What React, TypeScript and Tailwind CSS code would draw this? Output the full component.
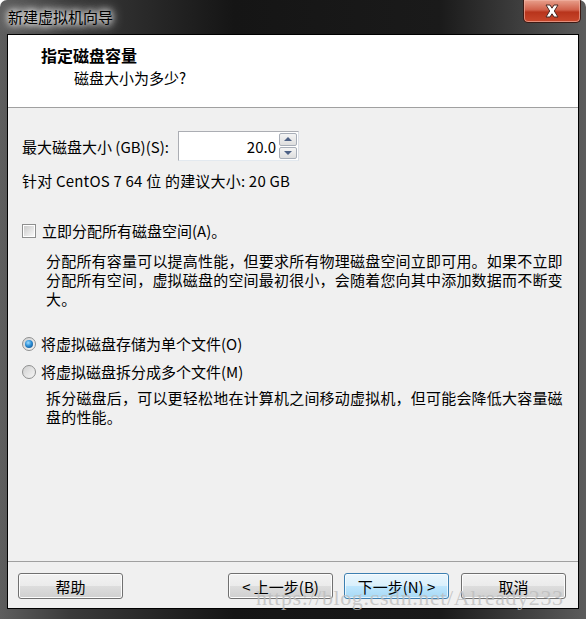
import React, { useState } from 'react';

const FONT = '"Noto Sans CJK SC", "Noto Sans", sans-serif';

const WinButton: React.FC<{ label: string; primary?: boolean; className?: string }> = ({ label, primary, className }) => (
  <button
    className={`h-[26px] w-[105px] rounded-[3px] border text-[15px] leading-none text-black ${
      primary
        ? 'border-[#3c7fb1] bg-[linear-gradient(180deg,#eaf6fd_0%,#d9f0fc_50%,#bee6fd_51%,#a7d9f5_100%)] shadow-[inset_0_0_0_1px_#ffffffaa]'
        : 'border-[#707070] bg-[linear-gradient(180deg,#f2f2f2_0%,#ebebeb_50%,#dddddd_51%,#cfcfcf_100%)] shadow-[inset_0_0_0_1px_#fcfcfc]'
    } ${className ?? ''}`}
  >
    {label}
  </button>
);

const App: React.FC = () => {
  const [allocate, setAllocate] = useState(false);
  const [single, setSingle] = useState(true);

  return (
    <div
      className="relative flex h-[619px] w-[586px] flex-col overflow-hidden rounded-t-[7px] bg-[linear-gradient(90deg,#5e5e5e_0%,#3a3a3a_12%,#151515_40%,#1a1a1a_75%,#5c5c5c_100%)] px-[7px] pb-[10px]"
      style={{ fontFamily: FONT }}
    >
      {/* Title bar */}
      <div className="flex h-[34px] shrink-0 items-start justify-between">
        <div className="pl-[1px] pt-[6px] text-[15px] leading-[22px] text-black [text-shadow:0_0_6px_#fff,0_0_10px_#fff,0_0_14px_#ddd]">
          新建虚拟机向导
        </div>
        <div className="mr-[-2px] flex h-[23px] w-[58px] items-center justify-center rounded-b-[5px] border border-t-0 border-[#3b1a14] bg-[linear-gradient(180deg,#e8a08c_0%,#d0604a_45%,#b8341c_55%,#c9482c_100%)] shadow-[inset_0_0_0_1px_#f2b3a3aa]">
          <svg width="18" height="14" viewBox="0 0 18 14">
            <path
              d="M3 1 L7 1 L9 4.2 L11 1 L15 1 L11.3 7 L15 13 L11 13 L9 9.8 L7 13 L3 13 L6.7 7 Z"
              fill="#ffffff"
              stroke="#4a2a24"
              strokeWidth="1"
              strokeLinejoin="round"
            />
          </svg>
        </div>
      </div>

      {/* Client area */}
      <div className="flex flex-1 flex-col border border-black bg-[#f0f0f0]">
        {/* Header */}
        <div className="h-[73px] shrink-0 border-b border-[#a0a0a0] bg-white">
          <div className="pl-[33px] pt-[9px] text-[16px] font-bold leading-[22px] text-black">指定磁盘容量</div>
          <div className="pl-[66px] pt-[1px] text-[15px] leading-[22px] text-black">磁盘大小为多少?</div>
        </div>

        {/* Body */}
        <div className="flex h-[453px] shrink-0 flex-col pl-[14px] text-[15px] text-black">
          <div className="mt-[23px] flex items-center">
            <span className="w-[156px] leading-[19px]">最大磁盘大小 (GB)(S):</span>
            <div className="flex h-[30px] w-[121px] border border-[#abadb3] border-b-[#e3e9ef] border-r-[#dbdfe6] bg-white">
              <div className="flex flex-1 items-center justify-end pr-[3px] leading-none">20.0</div>
              <div className="flex w-[19px] flex-col gap-[1px] py-[1px] pr-[1px]">
                <div className="flex flex-1 items-center justify-center rounded-[2px] border border-[#a8aeb8] bg-[linear-gradient(180deg,#f4f4f4,#dedede)]">
                  <svg width="8" height="4" viewBox="0 0 8 4"><path d="M0 4 L4 0 L8 4 Z" fill="#4d6185" /></svg>
                </div>
                <div className="flex flex-1 items-center justify-center rounded-[2px] border border-[#a8aeb8] bg-[linear-gradient(180deg,#f4f4f4,#dedede)]">
                  <svg width="8" height="4" viewBox="0 0 8 4"><path d="M0 0 L8 0 L4 4 Z" fill="#4d6185" /></svg>
                </div>
              </div>
            </div>
          </div>

          <div className="mt-[10px] leading-[19px] tracking-[0.2px]">针对 CentOS 7 64 位 的建议大小: 20 GB</div>

          <label className="mt-[31px] flex cursor-default items-center" onClick={() => setAllocate(!allocate)}>
            <span className="flex h-[14px] w-[14px] items-center justify-center border border-[#8e8f8f] bg-white">
              <span className="h-[10px] w-[10px] bg-[linear-gradient(135deg,#cbcbcb_0%,#e6e6e6_60%,#f8f8f8_100%)]">
                {allocate && (
                  <svg width="10" height="10" viewBox="0 0 10 10"><path d="M1.5 5 L4 7.5 L8.5 2" stroke="#1c3a6b" strokeWidth="1.8" fill="none" /></svg>
                )}
              </span>
            </span>
            <span className="ml-[6px] leading-[19px]">立即分配所有磁盘空间(A)。</span>
          </label>

          <div className="mt-[11px] pl-[24px] leading-[19px] tracking-[0.2px] whitespace-nowrap">
            分配所有容量可以提高性能，但要求所有物理磁盘空间立即可用。如果不立即
            <br />
            分配所有空间，虚拟磁盘的空间最初很小，会随着您向其中添加数据而不断变
            <br />
            大。
          </div>

          <label className="mt-[26px] flex cursor-default items-center" onClick={() => setSingle(true)}>
            <span className="flex h-[14px] w-[14px] items-center justify-center rounded-full border border-[#8e8f8f] bg-[linear-gradient(135deg,#d0d0d0,#f6f6f6)]">
              {single && (
                <span className="h-[8px] w-[8px] rounded-full bg-[radial-gradient(circle_at_40%_35%,#9fdcff_0%,#2b8ed6_45%,#0b3f78_100%)]" />
              )}
            </span>
            <span className="ml-[5px] leading-[19px]">将虚拟磁盘存储为单个文件(O)</span>
          </label>

          <label className="mt-[9px] flex cursor-default items-center" onClick={() => setSingle(false)}>
            <span className="flex h-[14px] w-[14px] items-center justify-center rounded-full border border-[#8e8f8f] bg-[linear-gradient(135deg,#d0d0d0,#f6f6f6)]">
              {!single && (
                <span className="h-[8px] w-[8px] rounded-full bg-[radial-gradient(circle_at_40%_35%,#9fdcff_0%,#2b8ed6_45%,#0b3f78_100%)]" />
              )}
            </span>
            <span className="ml-[5px] leading-[19px]">将虚拟磁盘拆分成多个文件(M)</span>
          </label>

          <div className="mt-[7px] pl-[24px] leading-[19px] tracking-[0.2px] whitespace-nowrap">
            拆分磁盘后，可以更轻松地在计算机之间移动虚拟机，但可能会降低大容量磁
            <br />
            盘的性能。
          </div>
        </div>

        {/* Footer */}
        <div className="flex flex-1 items-start border-t border-[#a0a0a0] pl-[10px] pt-[11px]">
          <WinButton label="帮助" />
          <WinButton label="< 上一步(B)" className="ml-[105px]" />
          <WinButton label="下一步(N) >" primary className="ml-[11px]" />
          <WinButton label="取消" className="ml-[12px]" />
        </div>
      </div>

      {/* Watermark */}
      <div
        className="pointer-events-none absolute left-[256px] top-[587px] text-[22px] leading-none tracking-[0.6px] text-[#bdbdbd]/80"
        style={{ fontFamily: '"Liberation Serif", "DejaVu Serif", serif' }}
      >
        https://blog.csdn.net/Already233
      </div>
    </div>
  );
};

export default App;
